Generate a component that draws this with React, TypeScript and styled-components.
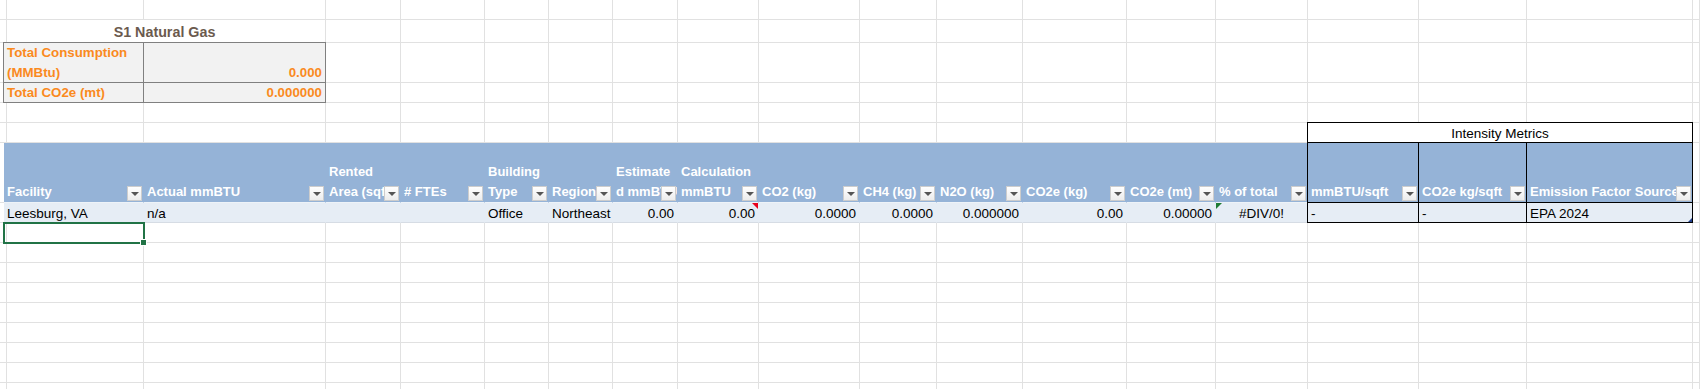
import React from 'react';
import styled, { createGlobalStyle, css } from 'styled-components';

const GlobalStyle = createGlobalStyle`
  html, body {
    margin: 0;
    padding: 0;
    background: #ffffff;
  }
  body {
    font-family: "Liberation Sans", Arial, sans-serif;
  }
`;

// column widths in px (first one is the sliver left of column A)
const COLUMNS = [4, 140, 182, 75, 84, 64, 64, 65, 81, 101, 77, 86, 104, 89, 92, 111, 108, 166];
const ROW_HEIGHTS = [20, 23, 40, 20, 20, 20, 60, 20, 20];
const TOTAL_COLS = COLUMNS.length + 1;
const EXTRA_ROWS = 8;

const GRID = '#e1e1e1';
const HEADER_BLUE = '#95b3d7';
const ROW_BLUE = '#e6edf5';
const ORANGE = '#fa8a1e';

type Align = 'left' | 'right' | 'center';
type Mark = 'comment' | 'error' | 'resize';

const Sheet = styled.div`
  display: grid;
  grid-template-columns: ${COLUMNS.map((w) => `${w}px`).join(' ')} 1fr;
  grid-template-rows: ${ROW_HEIGHTS.map((h) => `${h}px`).join(' ')};
  grid-auto-rows: 20px;
  width: 1700px;
  height: 389px;
  overflow: hidden;
  color: #000000;
`;

const Cell = styled.div<{ $span?: number; $align?: Align }>`
  position: relative;
  box-sizing: border-box;
  grid-column: span ${({ $span }) => $span ?? 1};
  min-width: 0;
  display: flex;
  flex-direction: column;
  justify-content: flex-end;
  align-items: ${({ $align }) =>
    $align === 'right' ? 'flex-end' : $align === 'center' ? 'center' : 'flex-start'};
  padding: 0 3px;
  border-right: 1px solid ${GRID};
  border-bottom: 1px solid ${GRID};
  white-space: nowrap;
  overflow: hidden;
  font-size: 13.5px;
  line-height: 16px;
`;

const boxed = (line: string) => css`
  z-index: 1;
  margin: -1px 0 0 -1px;
  border: 1px solid ${line};
`;

const Line = styled.span`
  display: block;
`;

const TitleCell = styled(Cell)`
  font-size: 14.3px;
  font-weight: 700;
  line-height: 20px;
  color: #6b5a4e;
`;

const SummaryCell = styled(Cell)`
  ${boxed('#808080')}
  background: #f2f2f2;
  color: ${ORANGE};
  font-size: 13.3px;
  font-weight: 700;
  line-height: 20px;
  ${Line}:last-child {
    margin-bottom: -1px;
  }
`;

const HeaderCell = styled(Cell)`
  background: ${HEADER_BLUE};
  border-right-color: ${HEADER_BLUE};
  border-bottom-color: #eef3f8;
  color: #ffffff;
  font-size: 13px;
  font-weight: 700;
  line-height: 20px;
  ${Line}:last-of-type {
    margin-bottom: -2px;
  }
`;

const BandCell = styled(Cell)`
  background: ${ROW_BLUE};
  border-right-color: ${ROW_BLUE};
  border-bottom-color: #d6dce4;
`;

const MetricTitleCell = styled(Cell)`
  ${boxed('#000000')}
`;

const MetricHeaderCell = styled(HeaderCell)`
  ${boxed('#000000')}
`;

const MetricBandCell = styled(BandCell)`
  ${boxed('#000000')}
`;

const FilterButton = styled.span`
  position: absolute;
  right: 1px;
  bottom: 1px;
  width: 15px;
  height: 15px;
  box-sizing: border-box;
  border: 1px solid #cdcdcd;
  background: linear-gradient(#ffffff, #ececec);
  display: flex;
  align-items: center;
  justify-content: center;
  &::after {
    content: '';
    margin-top: 1px;
    border-left: 4px solid transparent;
    border-right: 4px solid transparent;
    border-top: 4px solid #555555;
  }
`;

const CommentMark = styled.span`
  position: absolute;
  top: 0;
  right: 0;
  border-top: 6px solid #e8001c;
  border-left: 6px solid transparent;
`;

const ErrorMark = styled.span`
  position: absolute;
  top: 0;
  left: 0;
  border-top: 6px solid #1e7b34;
  border-right: 6px solid transparent;
`;

const ResizeMark = styled.span`
  position: absolute;
  right: 0;
  bottom: 0;
  border-bottom: 4px solid #23408e;
  border-left: 4px solid transparent;
`;

const SelectedCell = styled.div`
  position: relative;
  z-index: 2;
  margin: -1px;
  border: 2px solid #217346;
  &::after {
    content: '';
    position: absolute;
    right: -4px;
    bottom: -4px;
    width: 5px;
    height: 5px;
    background: #217346;
    border: 1px solid #ffffff;
  }
`;

type Column = { head: string[]; value: string; align?: Align; mark?: Mark };

const TABLE: Column[] = [
  { head: ['Facility'], value: 'Leesburg, VA' },
  { head: ['Actual mmBTU'], value: 'n/a' },
  { head: ['Rented', 'Area (sqft)'], value: '' },
  { head: ['# FTEs'], value: '' },
  { head: ['Building', 'Type'], value: 'Office' },
  { head: ['Region'], value: 'Northeast' },
  { head: ['Estimate', 'd mmBTU'], value: '0.00', align: 'right' },
  { head: ['Calculation', 'mmBTU'], value: '0.00', align: 'right', mark: 'comment' },
  { head: ['CO2 (kg)'], value: '0.0000', align: 'right' },
  { head: ['CH4 (kg)'], value: '0.0000', align: 'right' },
  { head: ['N2O (kg)'], value: '0.000000', align: 'right' },
  { head: ['CO2e (kg)'], value: '0.00', align: 'right' },
  { head: ['CO2e (mt)'], value: '0.00000', align: 'right' },
  { head: ['% of total'], value: '#DIV/0!', align: 'center', mark: 'error' },
];

const METRICS: Column[] = [
  { head: ['mmBTU/sqft'], value: '-' },
  { head: ['CO2e kg/sqft'], value: '-' },
  { head: ['Emission Factor Source'], value: 'EPA 2024', mark: 'resize' },
];

const blanks = (count: number, key: string) =>
  Array.from({ length: count }, (_, i) => <Cell key={`${key}-${i}`} />);

const renderMark = (mark?: Mark) => {
  if (mark === 'comment') return <CommentMark />;
  if (mark === 'error') return <ErrorMark />;
  if (mark === 'resize') return <ResizeMark />;
  return null;
};

const headLines = (head: string[]) => head.map((l) => <Line key={l}>{l}</Line>);

const App = (): JSX.Element => {
  return (
    <>
      <GlobalStyle />
      <Sheet>
        {blanks(TOTAL_COLS, 'r1')}

        <Cell />
        <TitleCell $span={2} $align="center">S1 Natural Gas</TitleCell>
        {blanks(TOTAL_COLS - 3, 'r2')}

        <Cell />
        <SummaryCell>
          <Line>Total Consumption</Line>
          <Line>(MMBtu)</Line>
        </SummaryCell>
        <SummaryCell $align="right">
          <Line>0.000</Line>
        </SummaryCell>
        {blanks(TOTAL_COLS - 3, 'r3')}

        <Cell />
        <SummaryCell>
          <Line>Total CO2e (mt)</Line>
        </SummaryCell>
        <SummaryCell $align="right">
          <Line>0.000000</Line>
        </SummaryCell>
        {blanks(TOTAL_COLS - 3, 'r4')}

        {blanks(TOTAL_COLS, 'r5')}

        {blanks(1 + TABLE.length, 'r6')}
        <MetricTitleCell $span={3} $align="center">Intensity Metrics</MetricTitleCell>
        <Cell />

        <Cell />
        {TABLE.map((c) => (
          <HeaderCell key={c.head.join(' ')}>
            {headLines(c.head)}
            <FilterButton />
          </HeaderCell>
        ))}
        {METRICS.map((c) => (
          <MetricHeaderCell key={c.head.join(' ')}>
            {headLines(c.head)}
            <FilterButton />
          </MetricHeaderCell>
        ))}
        <Cell />

        <Cell />
        {TABLE.map((c) => (
          <BandCell key={c.head.join(' ')} $align={c.align}>
            {c.value}
            {renderMark(c.mark)}
          </BandCell>
        ))}
        {METRICS.map((c) => (
          <MetricBandCell key={c.head.join(' ')} $align={c.align}>
            {c.value}
            {renderMark(c.mark)}
          </MetricBandCell>
        ))}
        <Cell />

        <Cell />
        <SelectedCell />
        {blanks(TOTAL_COLS - 2, 'r9')}

        {Array.from({ length: EXTRA_ROWS }, (_, r) => blanks(TOTAL_COLS, `x${r}`))}
      </Sheet>
    </>
  );
};

export default App;
